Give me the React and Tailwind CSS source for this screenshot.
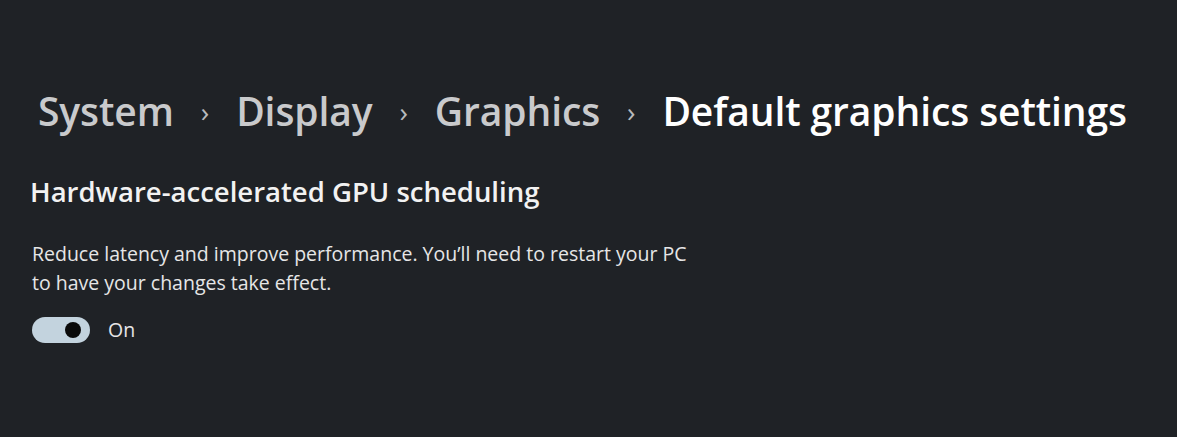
export default function App() {
  const font = { fontFamily: '"Open Sans", "Noto Sans", sans-serif' };
  return (
    <div className="w-[1177px] h-[437px] bg-[#1f2226] overflow-hidden" style={font}>
      <div className="pt-[86px] pl-[38px]">
        <div className="flex items-center h-[50px] text-[39px] font-semibold tracking-[-0.1px]">
          <span className="text-[#c9cacc]">System</span>
          <span className="text-[#b8babd] text-[28px] font-normal mx-[27px]">›</span>
          <span className="text-[#c9cacc]">Display</span>
          <span className="text-[#b8babd] text-[28px] font-normal mx-[27px]">›</span>
          <span className="text-[#c9cacc]">Graphics</span>
          <span className="text-[#b8babd] text-[28px] font-normal mx-[27px]">›</span>
          <span className="text-white">Default graphics settings</span>
        </div>
      </div>
      <div className="pl-[30px] mt-[40px]">
        <div className="text-[27.5px] font-semibold text-[#f2f2f2] leading-[32px]">
          Hardware-accelerated GPU scheduling
        </div>
        <div className="mt-[31px] pl-[2px] text-[19.5px] text-[#e6e6e6] leading-[29px] w-[800px]">
          Reduce latency and improve performance. You’ll need to restart your PC
          <br />
          to have your changes take effect.
        </div>
        <div className="flex items-center mt-[18px] pl-[2px]">
          <div className="w-[58px] h-[26px] rounded-full bg-[#c3d3de] flex items-center justify-end pr-[9px]">
            <div className="w-[16px] h-[16px] rounded-full bg-[#0a0a0a]" />
          </div>
          <span className="ml-[18px] text-[19.5px] text-[#e6e6e6]">On</span>
        </div>
      </div>
    </div>
  );
}
